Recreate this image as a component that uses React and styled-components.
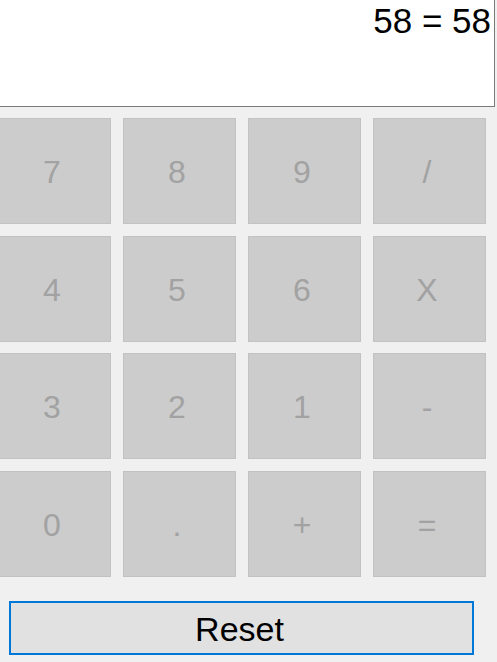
import React, { useState } from 'react';
import styled, { createGlobalStyle } from 'styled-components';

const GlobalStyle = createGlobalStyle`
  html, body {
    margin: 0;
    padding: 0;
    background: #F0F0F0;
    overflow: hidden;
  }
  * {
    box-sizing: border-box;
  }
`;

const Window = styled.div`
  width: 497px;
  height: 662px;
  background: #F0F0F0;
  display: flex;
  flex-direction: column;
  font-family: 'Liberation Sans', Arial, sans-serif;
`;

const Display = styled.div`
  width: 497px;
  height: 108px;
  margin-left: -2px;
  margin-top: -1px;
  background: #FFFFFF;
  border: 1px solid #7A7A7A;
  padding: 1px 3px 0 0;
  text-align: right;
  font-size: 35px;
  color: #000;
  white-space: nowrap;
`;

const Keypad = styled.div`
  display: grid;
  grid-template-columns: repeat(4, 113px);
  grid-auto-rows: 106px;
  column-gap: 12px;
  row-gap: 11.5px;
  margin-left: -2px;
  margin-top: 11px;
`;

const Key = styled.button`
  display: flex;
  align-items: center;
  justify-content: center;
  background: #CCCCCC;
  border: 1px solid #C2C2C2;
  color: #A2A2A2;
  font-family: 'Liberation Sans', Arial, sans-serif;
  font-size: 32px;
  padding: 3px 5px 0 0;
  cursor: default;
`;

const ResetButton = styled.button`
  width: 465px;
  height: 54px;
  margin: 24px 0 0 9px;
  background: #E1E1E1;
  border: 2px solid #0078D7;
  color: #000;
  font-family: 'Liberation Sans', Arial, sans-serif;
  font-size: 34px;
  padding: 3px 4px 0 0;
  cursor: pointer;
`;

const keys = ['7', '8', '9', '/', '4', '5', '6', 'X', '3', '2', '1', '-', '0', '.', '+', '='];

const App = () => {
  const [output, setOutput] = useState('58 = 58');

  return (
    <Window>
      <GlobalStyle />
      <Display>{output}</Display>
      <Keypad>
        {keys.map((k) => (
          <Key key={k} disabled>{k}</Key>
        ))}
      </Keypad>
      <ResetButton onClick={() => setOutput('')}>Reset</ResetButton>
    </Window>
  );
};

export default App;
